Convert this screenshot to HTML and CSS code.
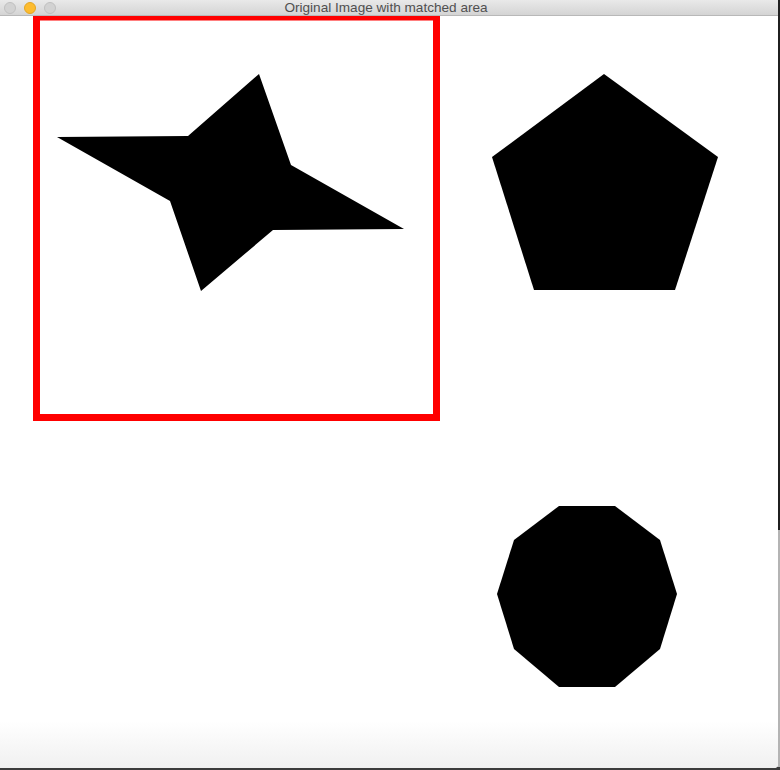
FILE: index.html
```html
<!DOCTYPE html>
<html>
<head>
<meta charset="utf-8">
<link rel="stylesheet" href="styles.css">
</head>
<body>
<div class="window">
  <div class="titlebar">
    <div class="lights">
      <span class="light light-gray"></span>
      <span class="light light-yellow"></span>
      <span class="light light-gray"></span>
    </div>
    <div class="title">Original Image with matched area</div>
  </div>
  <div class="content">
    <svg class="canvas" width="778" height="752" viewBox="0 16 778 752" xmlns="http://www.w3.org/2000/svg">
      <rect x="36.5" y="17" width="400" height="400.5" fill="none" stroke="#ff0000" stroke-width="7"/>
      <polygon points="57,137 188,136 259,74 291,165 404,229 273,230 201,291 170,201" fill="#000"/>
      <polygon points="604,74 718,157 675,290 534,290 492,157" fill="#000"/>
      <polygon points="559,506 615,506 660,540 677,594 660,649 615,687 559,687 514,649 497,594 514,540" fill="#000"/>
    </svg>
  </div>
</div>
</body>
</html>
```
FILE: styles.css
```css
html, body {
  margin: 0;
  padding: 0;
}
body {
  width: 780px;
  height: 770px;
  overflow: hidden;
  background: linear-gradient(to bottom, #1f1f1f 0, #1f1f1f 530px, #b4b4b4 530px, #b4b4b4 767px, #3c3c3c 767px);
}
.window {
  width: 778px;
  height: 768px;
  display: flex;
  flex-direction: column;
  background: #fff;
  border-bottom-right-radius: 4px;
  overflow: hidden;
}
.titlebar {
  height: 15px;
  flex: none;
  display: flex;
  align-items: center;
  background: linear-gradient(to bottom, #e9e9e9, #d4d4d4);
  border-bottom: 1px solid #b8b8b8;
  position: relative;
}
.lights {
  display: flex;
  gap: 8px;
  padding-left: 4px;
  align-items: center;
}
.light {
  width: 10px;
  height: 10px;
  border-radius: 50%;
  box-sizing: content-box;
}
.light-gray {
  background: #d2d2d2;
  border: 1px solid #c0c0c0;
}
.light-yellow {
  background: #fdbc2f;
  border: 1px solid #e3a624;
}
.title {
  position: absolute;
  left: 0;
  right: 0;
  top: 0;
  height: 15px;
  line-height: 15px;
  text-align: center;
  font-family: "Liberation Sans", Arial, sans-serif;
  font-size: 13.6px;
  color: #505050;
  padding-right: 6px;
}
.content {
  flex: 1;
  background: linear-gradient(to bottom, #fff 0, #fff 705px, #f0f0f0 752px);
}
.canvas {
  display: block;
}
```
